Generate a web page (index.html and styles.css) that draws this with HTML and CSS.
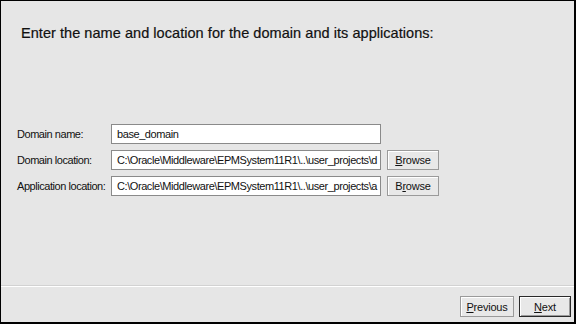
FILE: index.html
```html
<!DOCTYPE html>
<html>
<head>
<meta charset="utf-8">
<link rel="stylesheet" href="styles.css">
</head>
<body>
<div class="window">
  <h1 class="title">Enter the name and location for the domain and its applications:</h1>
  <div class="form">
    <label class="label">Domain name:</label>
    <div class="field">base_domain</div>
    <div></div>
    <label class="label">Domain location:</label>
    <div class="field">C:\Oracle\Middleware\EPMSystem11R1\..\user_projects\d</div>
    <button class="btn"><u>B</u>rowse</button>
    <label class="label">Application location:</label>
    <div class="field">C:\Oracle\Middleware\EPMSystem11R1\..\user_projects\a</div>
    <button class="btn">B<u>r</u>owse</button>
  </div>
  <div class="spacer"></div>
  <div class="footer">
    <button class="btn prev"><u>P</u>revious</button>
    <button class="btn next default"><u>N</u>ext</button>
  </div>
</div>
</body>
</html>
```
FILE: styles.css
```css
html, body {
  margin: 0;
  padding: 0;
}
body {
  width: 576px;
  height: 324px;
  overflow: hidden;
  font-family: "Liberation Sans", Arial, sans-serif;
  color: #111;
}
.window {
  box-sizing: border-box;
  width: 576px;
  height: 324px;
  background: #e6e6e6;
  border-top: 1px solid #000;
  border-left: 1px solid #000;
  border-right: 2px solid #000;
  border-bottom: 2px solid #000;
  display: flex;
  flex-direction: column;
}
.title {
  margin: 23px 0 0 20px;
  font-size: 14.5px;
  font-weight: normal;
  line-height: 18px;
  letter-spacing: 0.05px;
  -webkit-text-stroke: 0.2px #111;
}
.form {
  margin: 82px 0 0 16px;
  display: grid;
  grid-template-columns: 88px 270px 52px;
  column-gap: 6px;
  row-gap: 6px;
  grid-auto-rows: 20px;
}
.label {
  font-size: 11px;
  line-height: 20px;
  letter-spacing: -0.45px;
  white-space: nowrap;
}
.field {
  box-sizing: border-box;
  background: #fff;
  border: 1px solid #8a8a8a;
  font-size: 11px;
  letter-spacing: -0.42px;
  line-height: 18px;
  padding-left: 5px;
  white-space: nowrap;
  overflow: hidden;
}
.btn {
  box-sizing: border-box;
  margin: 0;
  padding: 0;
  height: 21px;
  background: #e8e8e8;
  border: 1px solid #9a9a9a;
  box-shadow: inset 1px 1px 0 #fff;
  font-family: inherit;
  font-size: 11px;
  letter-spacing: -0.2px;
  color: #111;
  line-height: 18px;
}
.form .btn {
  height: 20px;
}
.spacer {
  flex: 1;
}
.footer {
  border-top: 1px solid #d2d2d2;
  box-shadow: inset 0 1px 0 #fff;
  padding: 10px 3px 3px 0;
  display: flex;
  justify-content: flex-end;
  gap: 5px;
  height: 21px;
  margin-bottom: 2px;
}
.prev {
  width: 54px;
}
.next {
  width: 52px;
}
.default {
  border: 1px solid #2a2a2a;
  box-shadow: inset 1px 1px 0 #fff, inset -1px -1px 0 #9a9a9a;
}
```
